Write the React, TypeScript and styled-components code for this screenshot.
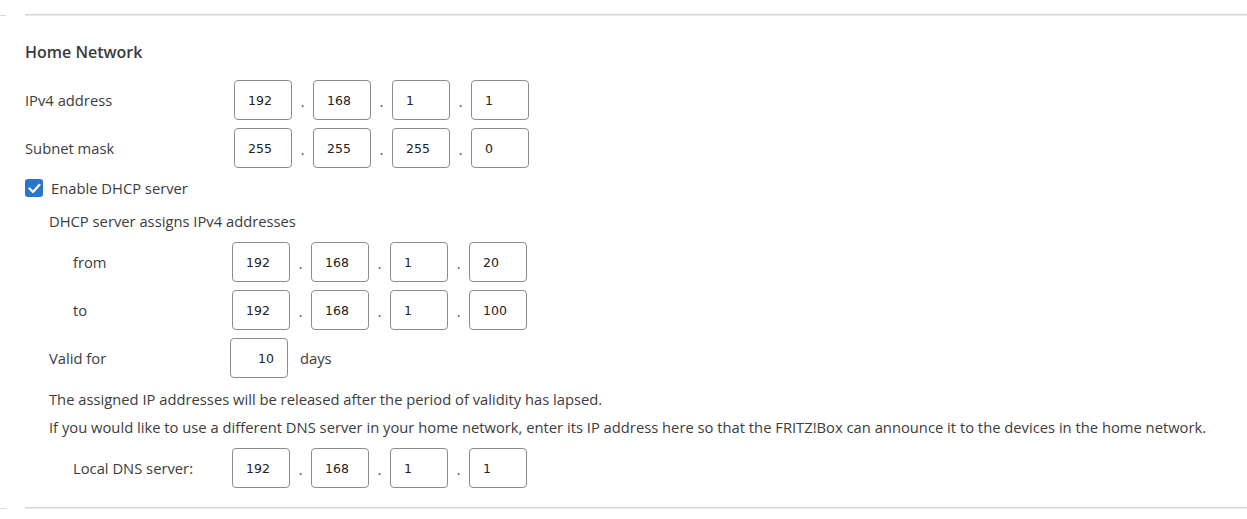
import React from "react";
import styled, { createGlobalStyle } from "styled-components";

const GlobalStyle = createGlobalStyle`
  body {
    margin: 0;
    background: #fff;
    font-family: "Open Sans", "Liberation Sans", sans-serif;
    color: #3c3c3c;
  }
`;

const Page = styled.div`
  width: 1247px;
  height: 519px;
  overflow: hidden;
  padding-top: 14px;
  box-sizing: border-box;
`;

const Divider = styled.div`
  display: flex;
  align-items: center;
  height: 2px;

  &::before {
    content: "";
    width: 6px;
    height: 1px;
    background: #d9d9d9;
    margin-right: 19px;
  }

  &::after {
    content: "";
    flex: 1;
    height: 2px;
    background: linear-gradient(#d4d4d4 50%, #ececec 50%);
  }
`;

const Section = styled.div`
  padding: 26px 0 11px;
`;

const Heading = styled.h2`
  margin: 0 0 18px 25px;
  font-size: 16px;
  line-height: 20px;
  font-weight: 600;
  color: #3a3a3a;
`;

const Row = styled.div<{ $indent: number; $label: number; $after?: number }>`
  display: grid;
  grid-template-columns: ${(p) => p.$label}px auto;
  align-items: center;
  padding-left: ${(p) => p.$indent}px;
  height: 40px;
  margin-bottom: ${(p) => p.$after ?? 8}px;
`;

const Label = styled.span`
  font-size: 14.75px;
`;

const Fields = styled.div`
  display: flex;
  align-items: center;
`;

const Box = styled.input<{ $right?: boolean }>`
  width: 58px;
  height: 40px;
  box-sizing: border-box;
  border: 1px solid #8c8c8c;
  border-radius: 4px;
  padding: 0 13px;
  font-family: "DejaVu Sans", Verdana, sans-serif;
  font-size: 12.5px;
  color: #222;
  text-align: ${(p) => (p.$right ? "right" : "left")};
  outline: none;
  background: #fff;
`;

const Dot = styled.span`
  width: 21px;
  text-align: center;
  align-self: flex-end;
  padding-bottom: 9px;
  font-size: 14px;
  color: #444;
`;

const Unit = styled.span`
  margin-left: 12px;
  font-size: 14.75px;
`;

const CheckRow = styled.label`
  display: flex;
  align-items: center;
  gap: 8px;
  padding-left: 25px;
  height: 20px;
  margin: 10px 0 13px;
  font-size: 14.75px;
`;

const CheckBox = styled.span`
  width: 18px;
  height: 18px;
  border-radius: 3px;
  background: #2a74c9;
  display: flex;
  align-items: center;
  justify-content: center;
`;

const Text = styled.p<{ $indent: number; $after: number }>`
  margin: 0 0 ${(p) => p.$after}px ${(p) => p.$indent}px;
  font-size: 14.75px;
  line-height: 20px;
`;

const IpFields: React.FC<{ parts: string[] }> = ({ parts }) => (
  <Fields>
    {parts.map((v, i) => (
      <React.Fragment key={i}>
        {i > 0 && <Dot>.</Dot>}
        <Box defaultValue={v} />
      </React.Fragment>
    ))}
  </Fields>
);

const App: React.FC = () => {
  return (
    <Page>
      <GlobalStyle />
      <Divider />
      <Section>
        <Heading>Home Network</Heading>
        <Row $indent={25} $label={209}>
          <Label>IPv4 address</Label>
          <IpFields parts={["192", "168", "1", "1"]} />
        </Row>
        <Row $indent={25} $label={209}>
          <Label>Subnet mask</Label>
          <IpFields parts={["255", "255", "255", "0"]} />
        </Row>
        <CheckRow>
          <CheckBox>
            <svg width="13" height="11" viewBox="0 0 13 11">
              <path d="M1.5 5.5 L5 9 L11.5 1.8" fill="none" stroke="#fff" strokeWidth="2.2" strokeLinecap="round" strokeLinejoin="round" />
            </svg>
          </CheckBox>
          Enable DHCP server
        </CheckRow>
        <Text $indent={49} $after={11}>DHCP server assigns IPv4 addresses</Text>
        <Row $indent={73} $label={159}>
          <Label>from</Label>
          <IpFields parts={["192", "168", "1", "20"]} />
        </Row>
        <Row $indent={73} $label={159}>
          <Label>to</Label>
          <IpFields parts={["192", "168", "1", "100"]} />
        </Row>
        <Row $indent={49} $label={181} $after={11}>
          <Label>Valid for</Label>
          <Fields>
            <Box $right defaultValue="10" />
            <Unit>days</Unit>
          </Fields>
        </Row>
        <Text $indent={49} $after={8}>
          The assigned IP addresses will be released after the period of validity has lapsed.
        </Text>
        <Text $indent={49} $after={11}>
          If you would like to use a different DNS server in your home network, enter its IP address here so that the FRITZ!Box can announce it to the devices in the home network.
        </Text>
        <Row $indent={73} $label={159}>
          <Label>Local DNS server:</Label>
          <IpFields parts={["192", "168", "1", "1"]} />
        </Row>
      </Section>
      <Divider />
    </Page>
  );
};

export default App;
